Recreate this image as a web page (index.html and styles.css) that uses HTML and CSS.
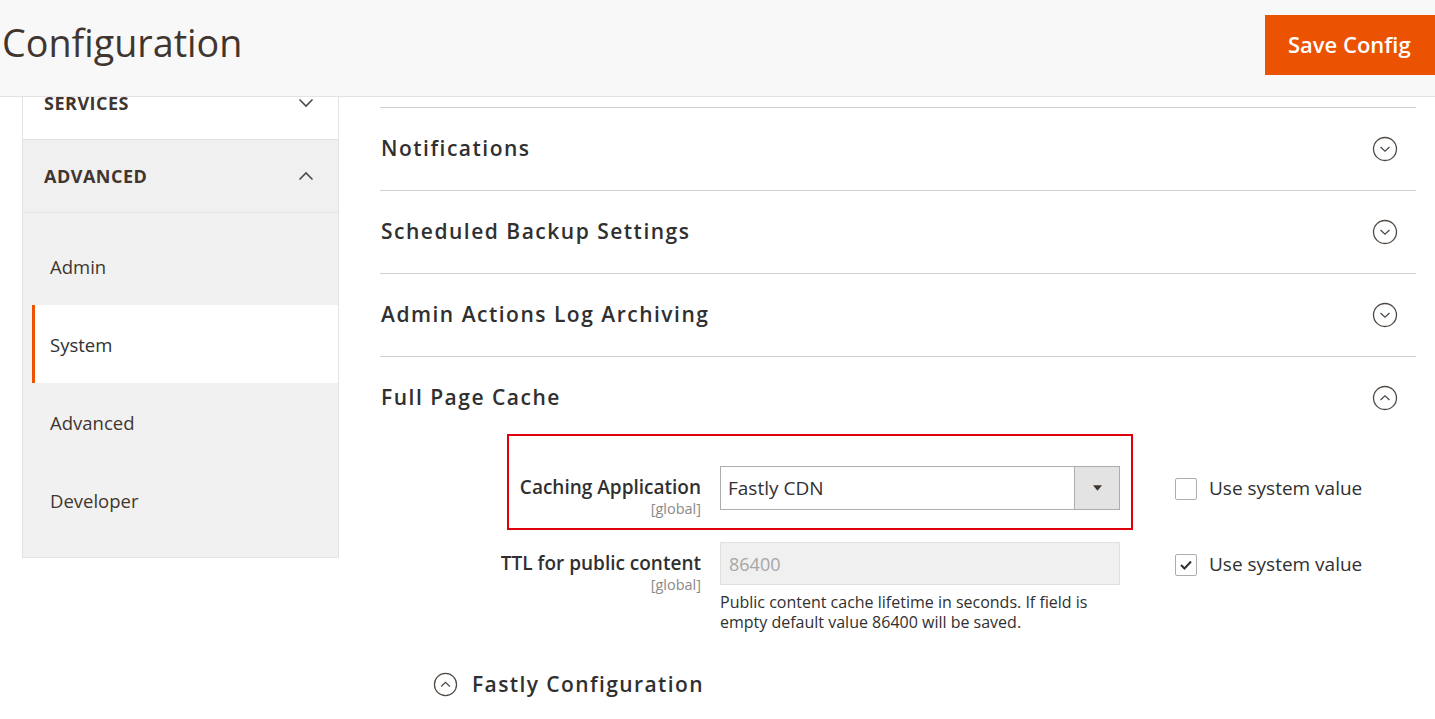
FILE: index.html
```html
<!DOCTYPE html>
<html lang="en">
<head>
<meta charset="utf-8">
<title>Configuration</title>
<link rel="stylesheet" href="styles.css">
</head>
<body>
<header class="page-header">
  <h1 class="page-title">Configuration</h1>
  <button class="btn-save" type="button">Save Config</button>
</header>

<div class="page-main">
  <aside class="sidebar">
    <div class="tab-group tab-group--closed">
      <span class="tab-group__title">SERVICES</span>
      <svg class="chev" width="16" height="10" viewBox="0 0 16 10"><path d="M1.5 1.5 L8 8 L14.5 1.5" fill="none" stroke="#514943" stroke-width="1.6"/></svg>
    </div>
    <div class="tab-group tab-group--open">
      <span class="tab-group__title">ADVANCED</span>
      <svg class="chev" width="16" height="10" viewBox="0 0 16 10"><path d="M1.5 8.5 L8 2 L14.5 8.5" fill="none" stroke="#514943" stroke-width="1.6"/></svg>
    </div>
    <ul class="tab-list">
      <li class="tab-item">Admin</li>
      <li class="tab-item tab-item--active">System</li>
      <li class="tab-item">Advanced</li>
      <li class="tab-item">Developer</li>
    </ul>
  </aside>

  <main class="content">
    <section class="section">
      <div class="section__head">
        <h2 class="section__title">Notifications</h2>
        <svg class="circ" width="26" height="26" viewBox="0 0 26 26"><circle cx="13" cy="13" r="11.5" fill="none" stroke="#514943" stroke-width="1.3"/><path d="M8.5 11 L13 15.2 L17.5 11" fill="none" stroke="#514943" stroke-width="1.3"/></svg>
      </div>
    </section>
    <section class="section">
      <div class="section__head">
        <h2 class="section__title">Scheduled Backup Settings</h2>
        <svg class="circ" width="26" height="26" viewBox="0 0 26 26"><circle cx="13" cy="13" r="11.5" fill="none" stroke="#514943" stroke-width="1.3"/><path d="M8.5 11 L13 15.2 L17.5 11" fill="none" stroke="#514943" stroke-width="1.3"/></svg>
      </div>
    </section>
    <section class="section">
      <div class="section__head">
        <h2 class="section__title">Admin Actions Log Archiving</h2>
        <svg class="circ" width="26" height="26" viewBox="0 0 26 26"><circle cx="13" cy="13" r="11.5" fill="none" stroke="#514943" stroke-width="1.3"/><path d="M8.5 11 L13 15.2 L17.5 11" fill="none" stroke="#514943" stroke-width="1.3"/></svg>
      </div>
    </section>
    <section class="section section--open">
      <div class="section__head">
        <h2 class="section__title">Full Page Cache</h2>
        <svg class="circ" width="26" height="26" viewBox="0 0 26 26"><circle cx="13" cy="13" r="11.5" fill="none" stroke="#514943" stroke-width="1.3"/><path d="M8.5 15 L13 10.8 L17.5 15" fill="none" stroke="#514943" stroke-width="1.3"/></svg>
      </div>
      <div class="form">
        <div class="highlight"></div>
        <div class="field">
          <div class="field__label">
            <span class="label-text">Caching Application</span>
            <span class="scope">[global]</span>
          </div>
          <div class="field__control">
            <div class="select">
              <span class="select__value">Fastly CDN</span>
              <span class="select__arrow"><svg width="9" height="6" viewBox="0 0 10 6"><path d="M0 0 H10 L5 6 Z" fill="#41362f"/></svg></span>
            </div>
          </div>
          <label class="use-default">
            <span class="checkbox"></span>
            <span>Use system value</span>
          </label>
        </div>
        <div class="field field--second">
          <div class="field__label">
            <span class="label-text">TTL for public content</span>
            <span class="scope">[global]</span>
          </div>
          <div class="field__control">
            <div class="input input--disabled">86400</div>
            <p class="note">Public content cache lifetime in seconds. If field is empty default value 86400 will be saved.</p>
          </div>
          <label class="use-default">
            <span class="checkbox checkbox--checked"><svg width="14" height="12" viewBox="0 0 14 12"><path d="M2 6 L5.5 9.5 L12 2.5" fill="none" stroke="#303030" stroke-width="2"/></svg></span>
            <span>Use system value</span>
          </label>
        </div>
        <div class="subsection">
          <svg class="circ" width="25" height="25" viewBox="0 0 26 26"><circle cx="13" cy="13" r="11.5" fill="none" stroke="#514943" stroke-width="1.3"/><path d="M8.5 15 L13 10.8 L17.5 15" fill="none" stroke="#514943" stroke-width="1.3"/></svg>
          <span class="subsection__title">Fastly Configuration</span>
        </div>
      </div>
    </section>
  </main>
</div>
</body>
</html>
```

FILE: styles.css
```css
* { box-sizing: border-box; }

html, body {
  margin: 0;
  padding: 0;
  background: #ffffff;
  font-family: "Open Sans", "Liberation Sans", Arial, sans-serif;
  color: #303030;
  overflow: hidden;
}

.page-header {
  position: sticky;
  top: 0;
  z-index: 2;
  height: 97px;
  background: #f8f8f8;
  border-bottom: 1px solid #e3e3e3;
  display: flex;
  align-items: flex-start;
  justify-content: space-between;
}

.page-title {
  margin: 19px 0 0 2px;
  font-size: 37.7px;
  font-weight: 400;
  line-height: 48px;
  color: #41362f;
}

.btn-save {
  margin-top: 15px;
  width: 170px;
  height: 60px;
  border: 0;
  background: #eb5202;
  color: #ffffff;
  font-family: "Open Sans", "Liberation Sans", Arial, sans-serif;
  font-weight: 600;
  font-size: 22px;
  text-align: left;
  padding: 0 0 2px 23px;
}

.page-main {
  margin-top: -30px;
  display: flex;
  gap: 41px;
  padding: 0 19px 0 22px;
}

/* Sidebar */
.sidebar {
  width: 317px;
  flex: none;
  background: #f1f1f1;
  border: 1px solid #e3e3e3;
  border-top: 0;
  padding-bottom: 18px;
  align-self: flex-start;
}

.tab-group {
  height: 73px;
  display: flex;
  align-items: center;
  justify-content: space-between;
  padding: 0 24px 0 21px;
}

.tab-group--closed {
  background: #ffffff;
  border-bottom: 1px solid #e3e3e3;
}

.tab-group--open {
  background: #f0f0f0;
  border-bottom: 1px solid #e3e3e3;
}

.tab-group__title {
  font-weight: 700;
  font-size: 18px;
  letter-spacing: 0.5px;
  color: #41362f;
}

.chev { display: block; }

.tab-list {
  list-style: none;
  margin: 0;
  padding: 14px 0 0 9px;
}

.tab-item {
  height: 78px;
  display: flex;
  align-items: center;
  padding-left: 15px;
  border-left: 3px solid transparent;
  font-size: 18.5px;
  color: #41362f;
}

.tab-item--active {
  background: #ffffff;
  border-left-color: #eb5202;
  color: #303030;
}

/* Content */
.content {
  flex: 1;
  padding-top: 40px;
}

.section {
  border-top: 1px solid #d1d1d1;
}

.section__head {
  height: 82px;
  display: flex;
  align-items: center;
  justify-content: space-between;
  padding: 0 18px 0 1px;
}

.section__title {
  margin: 0 0 2px 0;
  font-size: 21px;
  font-weight: 600;
  letter-spacing: 1.5px;
  color: #303030;
}

.circ { display: block; }

.form {
  position: relative;
  padding-top: 27px;
}

.highlight {
  position: absolute;
  left: 127px;
  top: -5px;
  width: 626px;
  height: 96px;
  border: 2px solid #e0000b;
  pointer-events: none;
}

.field {
  display: flex;
  align-items: flex-start;
}

.field--second {
  margin-top: 24px;
}

.field__label {
  width: 321px;
  flex: none;
  display: flex;
  flex-direction: column;
  align-items: flex-end;
  padding-top: 9px;
}

.label-text {
  font-size: 19px;
  font-weight: 600;
  line-height: 25px;
  color: #303030;
}

.scope {
  font-size: 14.5px;
  color: #8a8a8a;
  line-height: 18px;
}

.field__control {
  width: 400px;
  flex: none;
  margin-left: 19px;
}

.select {
  height: 44px;
  border: 1px solid #adadad;
  display: flex;
  align-items: stretch;
  background: #ffffff;
}

.select__value {
  flex: 1;
  display: flex;
  align-items: center;
  padding-left: 7px;
  font-size: 19px;
  color: #303030;
}

.select__arrow {
  width: 45px;
  background: #e3e3e3;
  border-left: 1px solid #adadad;
  display: flex;
  align-items: center;
  justify-content: center;
}

.input {
  height: 43px;
  border: 1px solid #e0e0e0;
  display: flex;
  align-items: center;
  padding-left: 8px;
  font-size: 18px;
}

.input--disabled {
  background: #f0f0f0;
  color: #a6a6a6;
}

.note {
  margin: 7px 0 0 0;
  font-size: 16px;
  line-height: 20px;
  color: #303030;
  padding-right: 20px;
}

.use-default {
  margin-left: 55px;
  height: 44px;
  display: flex;
  align-items: center;
  gap: 12px;
  font-size: 19px;
  color: #303030;
}

.checkbox {
  width: 22px;
  height: 22px;
  border: 1px solid #adadad;
  border-radius: 2px;
  background: #ffffff;
  display: flex;
  align-items: center;
  justify-content: center;
  margin-top: 2px;
}

.subsection {
  margin-top: 38px;
  margin-left: 53px;
  display: flex;
  align-items: center;
  gap: 14px;
}

.subsection__title {
  font-size: 21px;
  font-weight: 600;
  letter-spacing: 1.4px;
  color: #303030;
}
```
